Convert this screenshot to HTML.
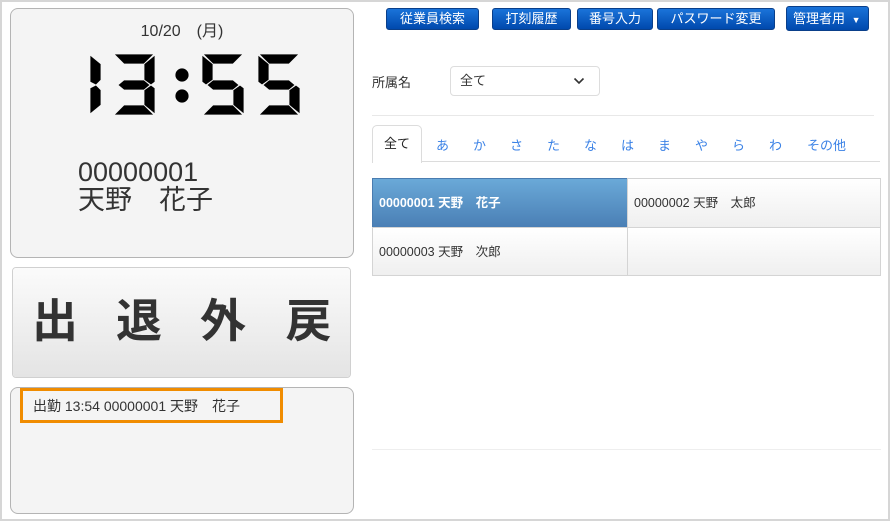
<!DOCTYPE html>
<html><head><meta charset="utf-8"><style>
*{box-sizing:border-box;margin:0;padding:0}
body{width:890px;height:521px;background:#fff;font-family:"Liberation Sans","Noto Sans CJK JP",sans-serif;position:relative;overflow:hidden;color:#333}
.frame{position:absolute;left:0;top:0;width:890px;height:521px;border:2px solid #d6d6d6}
.abs{position:absolute}
.panel{background:#f4f4f4;border:1px solid #b4b4b4;border-radius:8px}
.btn{position:absolute;top:8px;height:22px;border-radius:3px;background:linear-gradient(#1a73d9,#0049ad);border:1px solid #0a3f8a;color:#fff;font-size:13px;line-height:20px;text-align:center}
.cell{position:absolute;border:1px solid #d4d4d4;background:linear-gradient(#fff,#efefef);font-size:12.5px;line-height:48px;padding-left:6px;color:#333}
.tab{position:absolute;top:135px;font-size:13px;color:#3b82e6}
.pb{position:absolute;top:0;height:109px;width:85px;background:linear-gradient(#fbfbfb,#e4e4e4);border-right:1px solid #d2d2d2;font-size:46px;font-weight:bold;text-align:center;line-height:106px;color:#333}
</style></head><body>
<div class="frame"></div>

<div class="abs panel" style="left:10px;top:8px;width:344px;height:250px"></div>
<div class="abs" style="left:10px;top:17px;width:344px;text-align:center;font-size:16px">10/20　(月)</div>
<svg class="abs" style="left:86px;top:53px" width="220" height="64" viewBox="0 0 220 64">
<g fill="#000" stroke="#f4f4f4" stroke-width="0.8">
<g transform="translate(4,0)">
<polygon points="0,2 11,11 11,27 6,32 0,29"/>
<polygon points="0,35 6,32 11,37 11,52 0,61"/>
</g>
<g transform="translate(27,0)">
<polygon points="1,1 41,1 31,11 11,11"/>
<polygon points="42,2 42,29 38,32 31,27 31,11"/>
<polygon points="42,35 42,61 31,52 31,37 38,32"/>
<polygon points="11,52 31,52 41,62 1,62"/>
<polygon points="5,32 11,27 31,27 37,32 31,37 11,37"/>
</g>
<circle cx="96" cy="22" r="7"/><circle cx="96" cy="43" r="7"/>
<g transform="translate(116,0)">
<polygon points="1,1 41,1 31,11 11,11"/>
<polygon points="0,2 11,11 11,27 4,32 0,29"/>
<polygon points="5,32 11,27 31,27 37,32 31,37 11,37"/>
<polygon points="42,35 42,61 31,52 31,37 38,32"/>
<polygon points="11,52 31,52 41,62 1,62"/>
</g>
<g transform="translate(172,0)">
<polygon points="1,1 41,1 31,11 11,11"/>
<polygon points="0,2 11,11 11,27 4,32 0,29"/>
<polygon points="5,32 11,27 31,27 37,32 31,37 11,37"/>
<polygon points="42,35 42,61 31,52 31,37 38,32"/>
<polygon points="11,52 31,52 41,62 1,62"/>
</g>
</g></svg>
<div class="abs" style="left:78px;top:158px;font-size:27px;line-height:28px">00000001<br>天野　花子</div>

<div class="abs" style="left:12px;top:267px;width:339px;height:111px;border:1px solid #d0d0d0;border-radius:4px;overflow:hidden">
<div class="pb" style="left:0">出</div>
<div class="pb" style="left:84px">退</div>
<div class="pb" style="left:168px">外</div>
<div class="pb" style="left:252px;border-right:none;width:87px">戻</div>
</div>

<div class="abs panel" style="left:10px;top:387px;width:344px;height:127px"></div>
<div class="abs" style="left:20px;top:388px;width:263px;height:35px;border:3px solid #f08c00"></div>
<div class="abs" style="left:33px;top:396px;font-size:14px">出勤 13:54 00000001 天野　花子</div>

<div class="btn" style="left:386px;width:93px">従業員検索</div>
<div class="btn" style="left:492px;width:79px">打刻履歴</div>
<div class="btn" style="left:577px;width:76px">番号入力</div>
<div class="btn" style="left:657px;width:118px">パスワード変更</div>
<div class="btn" style="left:786px;top:6px;height:25px;width:83px;line-height:23px;text-align:left;padding-left:6px">管理者用 <span style="font-size:9px;margin-left:3px">▼</span></div>

<div class="abs" style="left:372px;top:72px;font-size:13px">所属名</div>
<div class="abs" style="left:450px;top:66px;width:150px;height:30px;border:1px solid #ddd;border-radius:4px;font-size:13px;line-height:28px;padding-left:9px">全て
<svg class="abs" style="left:122px;top:10px" width="12" height="8" viewBox="0 0 12 8"><path d="M1.5 1.5 L6 6 L10.5 1.5" fill="none" stroke="#333" stroke-width="1.6"/></svg></div>

<div class="abs" style="left:372px;top:115px;width:502px;height:1px;background:#e8e8e8"></div>
<div class="abs" style="left:372px;top:161px;width:508px;height:1px;background:#dcdcdc"></div>
<div class="abs" style="left:372px;top:125px;width:50px;height:38px;border:1px solid #dcdcdc;border-bottom:none;border-radius:5px 5px 0 0;background:#fff;font-size:13px;text-align:center;line-height:36px;color:#222">全て</div>
<div class="tab" style="left:436px">あ</div>
<div class="tab" style="left:473px">か</div>
<div class="tab" style="left:510px">さ</div>
<div class="tab" style="left:547px">た</div>
<div class="tab" style="left:584px">な</div>
<div class="tab" style="left:621px">は</div>
<div class="tab" style="left:658px">ま</div>
<div class="tab" style="left:695px">や</div>
<div class="tab" style="left:732px">ら</div>
<div class="tab" style="left:769px">わ</div>
<div class="tab" style="left:807px">その他</div>

<div class="cell" style="left:372px;top:178px;width:256px;height:50px;background:linear-gradient(#6aa9d8,#4a7fb5);border-color:#4a7cb0;color:#fff;font-weight:bold">00000001 天野　花子</div>
<div class="cell" style="left:627px;top:178px;width:254px;height:50px">00000002 天野　太郎</div>
<div class="cell" style="left:372px;top:227px;width:256px;height:49px">00000003 天野　次郎</div>
<div class="cell" style="left:627px;top:227px;width:254px;height:49px"></div>

<div class="abs" style="left:372px;top:449px;width:509px;height:1px;background:#eee"></div>
</body></html>
